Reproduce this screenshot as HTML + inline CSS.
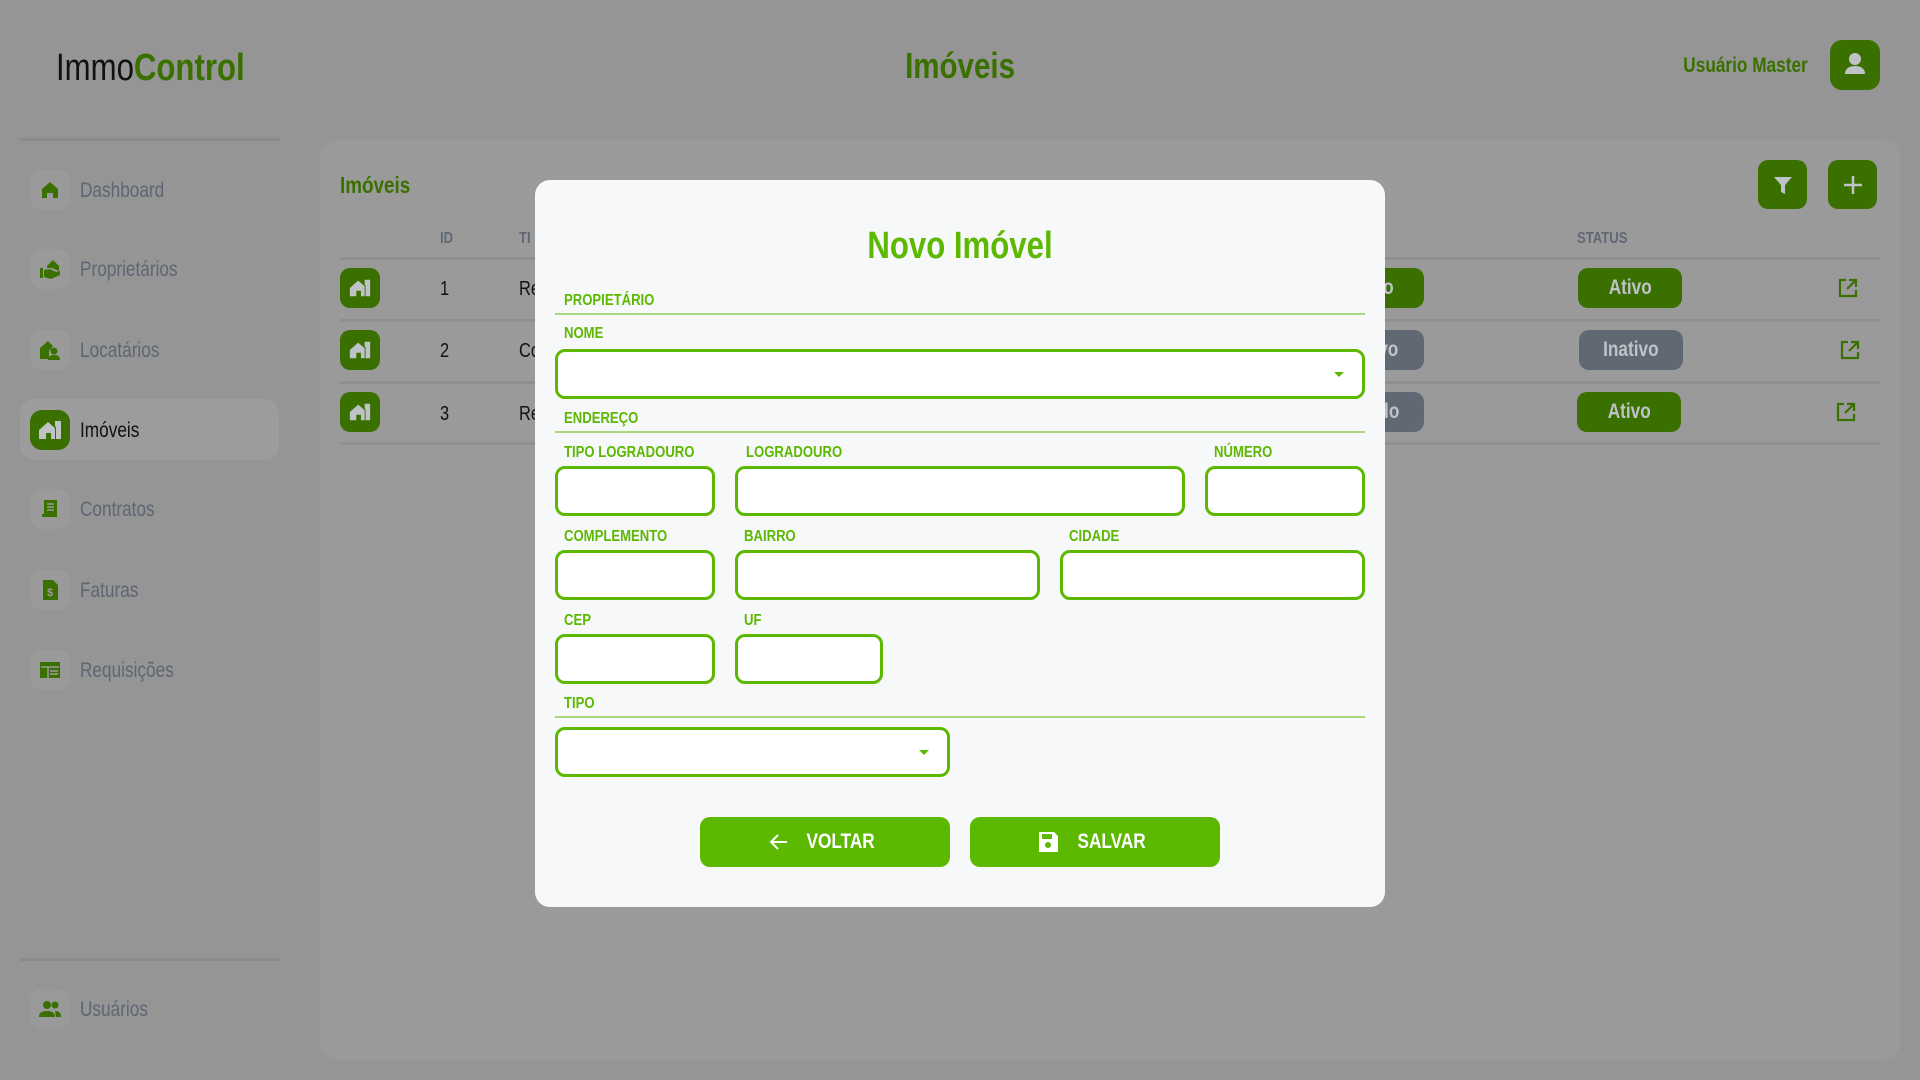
<!DOCTYPE html>
<html><head><meta charset="utf-8">
<style>
*{box-sizing:border-box;margin:0;padding:0}
body{width:1920px;height:1080px;background:#959595;font-family:"Liberation Sans Narrow","Liberation Sans",sans-serif;position:relative;overflow:hidden}
.a{position:absolute}
.n{transform:scaleX(.82);transform-origin:left center;white-space:nowrap}
.c{display:inline-block;transform:scaleX(.82);white-space:nowrap}
.logo{left:56px;top:47px;font-size:38px;color:#111}
.logo b{color:#3a7000}
.title{left:0;width:1920px;text-align:center;top:45px;font-size:36px;font-weight:bold;color:#3a7000}
.user{right:112px;top:54px;font-size:21px;font-weight:bold;color:#3a7000;transform:scaleX(.82);transform-origin:right center}
.av{left:1830px;top:40px;width:50px;height:50px;border-radius:12px;background:#3a7000}
.hr{height:3px;background:#8a8a8a}
.nav{left:30px;width:40px;height:40px;border-radius:12px;background:#9a9a9a;display:flex;align-items:center;justify-content:center}
.nl{left:80px;font-size:21px;color:#5d6672;top:0}
.card{left:320px;top:140px;width:1580px;height:920px;border-radius:18px;background:#9a9a9a}
.ib{width:49px;height:49px;border-radius:10px;background:#3a7000;display:flex;align-items:center;justify-content:center}
.th{font-size:16px;font-weight:bold;color:#606874}
.row{left:340px;width:1540px;height:3px;background:#8f8f8f}
.ri{left:340px;width:40px;height:40px;border-radius:10px;background:#3a7000;display:flex;align-items:center;justify-content:center}
.cell{font-size:20px;color:#111}
.pill{width:104px;height:40px;border-radius:10px;color:#bfc3c8;font-size:21px;font-weight:bold;display:flex;align-items:center;justify-content:center}
.g{background:#3a7000}.s{background:#606874}
.modal{left:535px;top:180px;width:850px;height:727px;background:#f7f8fa;border-radius:15px}
.mt{left:535px;width:850px;text-align:center;top:225px;font-size:38px;font-weight:bold;color:#5cb800}
.lb{font-size:16px;font-weight:bold;color:#5cb800}
.ln{left:555px;width:810px;height:2px;background:#a6d880}
.in{height:50px;border:3px solid #5cb800;border-radius:10px;background:#fff}
.btn{top:817px;width:250px;height:50px;border-radius:10px;background:#5cb800;color:#fff;font-size:21px;font-weight:bold;display:flex;align-items:center;justify-content:center;gap:10px}
.car{position:absolute;right:18px;top:20px;border-left:5px solid transparent;border-right:5px solid transparent;border-top:5px solid #5cb800}
</style></head><body>
<div class="a logo n">Immo<b>Control</b></div>
<div class="a title"><span class="c">Imóveis</span></div>
<div class="a user">Usuário Master</div>
<div class="a av"><svg width="50" height="50" viewBox="0 0 50 50"><circle cx="25" cy="19" r="6" fill="#bfc3c8"/><path d="M15 34c0-6 5-8 10-8s10 2 10 8z" fill="#bfc3c8"/></svg></div>
<div class="a hr" style="left:20px;top:138px;width:260px"></div>
<div class="a" style="left:20px;top:399px;width:259px;height:61px;border-radius:14px;background:#9c9c9c"></div>

<div class="a nav" style="top:170px"><svg width="20" height="20" viewBox="0 0 20 20"><path d="M2 9L10 2l8 7v9h-5v-5H7v5H2z" fill="#3a7000"/></svg></div>
<div class="a nl n" style="top:179px">Dashboard</div>
<div class="a nav" style="top:249px"><svg width="24" height="22" viewBox="0 0 24 22"><path d="M2 10h3v10H2zM6 12l6-1 6 3 4-1v4l-9 4-7-2zM9 8l6-6 6 6v5l-7-3-5 0z" fill="#3a7000"/></svg></div>
<div class="a nl n" style="top:258px">Proprietários</div>
<div class="a nav" style="top:330px"><svg width="24" height="22" viewBox="0 0 24 22"><path d="M2 9L10 2l5 5-4 5v8H2z" fill="#3a7000"/><circle cx="16" cy="12" r="3.5" fill="#3a7000"/><path d="M10 21c0-4 3-5 6-5s6 1 6 5z" fill="#3a7000"/></svg></div>
<div class="a nl n" style="top:339px">Locatários</div>
<div class="a nav" style="top:410px;background:#3a7000"><svg width="26" height="22" viewBox="0 0 26 22"><path d="M2 11L11 3l7 6v11h-4v-6H9v6H2z" fill="#bfc3c8"/><path d="M18 2h6v18h-5V8l-1-1z" fill="#bfc3c8"/></svg></div>
<div class="a nl n" style="top:419px;color:#111">Imóveis</div>
<div class="a nav" style="top:489px"><svg width="22" height="22" viewBox="0 0 22 22"><path d="M5 2h13v17H3v-3h2z" fill="#3a7000"/><path d="M8 6h7M8 9h7M8 12h7" stroke="#9a9a9a" stroke-width="1.5"/></svg></div>
<div class="a nl n" style="top:498px">Contratos</div>
<div class="a nav" style="top:570px"><svg width="20" height="22" viewBox="0 0 20 22"><path d="M3 1h10l5 5v15H3z" fill="#3a7000"/><text x="7" y="17" font-size="11" font-weight="bold" fill="#9a9a9a" font-family="Liberation Sans">$</text></svg></div>
<div class="a nl n" style="top:579px">Faturas</div>
<div class="a nav" style="top:650px"><svg width="22" height="20" viewBox="0 0 22 20"><path d="M1 2h20v16H1z" fill="#3a7000"/><path d="M2 7h18M9 7v11M11 11h8M11 14h8" stroke="#9a9a9a" stroke-width="1.5"/></svg></div>
<div class="a nl n" style="top:659px">Requisições</div>
<div class="a hr" style="left:20px;top:958px;width:260px"></div>
<div class="a nav" style="top:989px"><svg width="24" height="18" viewBox="0 0 24 18"><circle cx="9" cy="5" r="4" fill="#3a7000"/><circle cx="17" cy="5" r="3.5" fill="#3a7000"/><path d="M1 17c0-5 4-6 8-6s8 1 8 6zM17 11c4 0 6 2 6 6h-5z" fill="#3a7000"/></svg></div>
<div class="a nl n" style="top:998px">Usuários</div>

<div class="a card"></div>
<div class="a n" style="left:340px;top:172px;font-size:23px;font-weight:bold;color:#3a7000">Imóveis</div>
<div class="a ib" style="left:1758px;top:160px"><svg width="22" height="22" viewBox="0 0 22 22"><path d="M2 3h18l-7 8v9l-4-2v-7z" fill="#bfc3c8"/></svg></div>
<div class="a ib" style="left:1828px;top:160px"><svg width="24" height="24" viewBox="0 0 24 24"><path d="M12 3v18M3 12h18" stroke="#bfc3c8" stroke-width="2.5"/></svg></div>
<div class="a th n" style="left:440px;top:230px">ID</div>
<div class="a th n" style="left:519px;top:230px">TI</div>
<div class="a th n" style="left:1577px;top:230px">STATUS</div>
<div class="a row" style="top:257px"></div><div class="a row" style="top:319px"></div><div class="a row" style="top:381px"></div><div class="a row" style="top:442px"></div>

<div class="a ri" style="top:268px"><svg width="24" height="22" viewBox="0 0 26 22"><path d="M2 11L11 3l7 6v11h-4v-6H9v6H2z" fill="#bfc3c8"/><path d="M18 2h6v18h-5V8l-1-1z" fill="#bfc3c8"/></svg></div>
<div class="a ri" style="top:330px"><svg width="24" height="22" viewBox="0 0 26 22"><path d="M2 11L11 3l7 6v11h-4v-6H9v6H2z" fill="#bfc3c8"/><path d="M18 2h6v18h-5V8l-1-1z" fill="#bfc3c8"/></svg></div>
<div class="a ri" style="top:392px"><svg width="24" height="22" viewBox="0 0 26 22"><path d="M2 11L11 3l7 6v11h-4v-6H9v6H2z" fill="#bfc3c8"/><path d="M18 2h6v18h-5V8l-1-1z" fill="#bfc3c8"/></svg></div>
<div class="a cell n" style="left:440px;top:278px">1</div><div class="a cell n" style="left:519px;top:278px">Re</div>
<div class="a cell n" style="left:440px;top:340px">2</div><div class="a cell n" style="left:519px;top:340px">Co</div>
<div class="a cell n" style="left:440px;top:403px">3</div><div class="a cell n" style="left:519px;top:403px">Re</div>
<div class="a pill g" style="left:1330px;top:268px;width:94px;justify-content:flex-start;padding-left:52px"><span class="c">o</span></div>
<div class="a pill s" style="left:1330px;top:330px;width:94px;justify-content:flex-start;padding-left:46px"><span class="c">vo</span></div>
<div class="a pill s" style="left:1330px;top:392px;width:94px;justify-content:flex-start;padding-left:46px"><span class="c">do</span></div>
<div class="a pill g" style="left:1578px;top:268px;width:104px"><span class="c">Ativo</span></div>
<div class="a pill s" style="left:1579px;top:330px;width:104px"><span class="c">Inativo</span></div>
<div class="a pill g" style="left:1577px;top:392px;width:104px"><span class="c">Ativo</span></div>
<svg class="a" style="left:1837px;top:277px" width="22" height="22" viewBox="0 0 22 22"><path d="M9 3H3v16h16v-6M12 3h7v7M19 3l-9 9" stroke="#3a7000" stroke-width="2.2" fill="none"/></svg>
<svg class="a" style="left:1839px;top:339px" width="22" height="22" viewBox="0 0 22 22"><path d="M9 3H3v16h16v-6M12 3h7v7M19 3l-9 9" stroke="#3a7000" stroke-width="2.2" fill="none"/></svg>
<svg class="a" style="left:1835px;top:401px" width="22" height="22" viewBox="0 0 22 22"><path d="M9 3H3v16h16v-6M12 3h7v7M19 3l-9 9" stroke="#3a7000" stroke-width="2.2" fill="none"/></svg>

<div class="a modal"></div>
<div class="a mt"><span class="c">Novo Imóvel</span></div>
<div class="a lb n" style="left:564px;top:292px">PROPIETÁRIO</div>
<div class="a ln" style="top:313px"></div>
<div class="a lb n" style="left:564px;top:325px">NOME</div>
<div class="a in" style="left:555px;top:349px;width:810px"><span class="car"></span></div>
<div class="a lb n" style="left:564px;top:410px">ENDEREÇO</div>
<div class="a ln" style="top:431px"></div>
<div class="a lb n" style="left:564px;top:444px">TIPO LOGRADOURO</div>
<div class="a lb n" style="left:746px;top:444px">LOGRADOURO</div>
<div class="a lb n" style="left:1214px;top:444px">NÚMERO</div>
<div class="a in" style="left:555px;top:466px;width:160px"></div>
<div class="a in" style="left:735px;top:466px;width:450px"></div>
<div class="a in" style="left:1205px;top:466px;width:160px"></div>
<div class="a lb n" style="left:564px;top:528px">COMPLEMENTO</div>
<div class="a lb n" style="left:744px;top:528px">BAIRRO</div>
<div class="a lb n" style="left:1069px;top:528px">CIDADE</div>
<div class="a in" style="left:555px;top:550px;width:160px"></div>
<div class="a in" style="left:735px;top:550px;width:305px"></div>
<div class="a in" style="left:1060px;top:550px;width:305px"></div>
<div class="a lb n" style="left:564px;top:612px">CEP</div>
<div class="a lb n" style="left:744px;top:612px">UF</div>
<div class="a in" style="left:555px;top:634px;width:160px"></div>
<div class="a in" style="left:735px;top:634px;width:148px"></div>
<div class="a lb n" style="left:564px;top:695px">TIPO</div>
<div class="a ln" style="top:716px"></div>
<div class="a in" style="left:555px;top:727px;width:395px"><span class="car"></span></div>
<div class="a btn" style="left:700px"><svg width="24" height="24" viewBox="0 0 24 24"><path d="M20 12H5M11 5l-7 7 7 7" stroke="#fff" stroke-width="2" fill="none"/></svg><span class="c" style="margin-left:-2px">VOLTAR</span></div>
<div class="a btn" style="left:970px"><svg width="24" height="24" viewBox="0 0 24 24"><path d="M3 2h15l4 4v16H3z" fill="#fff"/><rect x="6" y="4" width="10" height="5" fill="#5cb800"/><circle cx="12" cy="15" r="3" fill="#5cb800"/></svg><span class="c">SALVAR</span></div>
</body></html>
